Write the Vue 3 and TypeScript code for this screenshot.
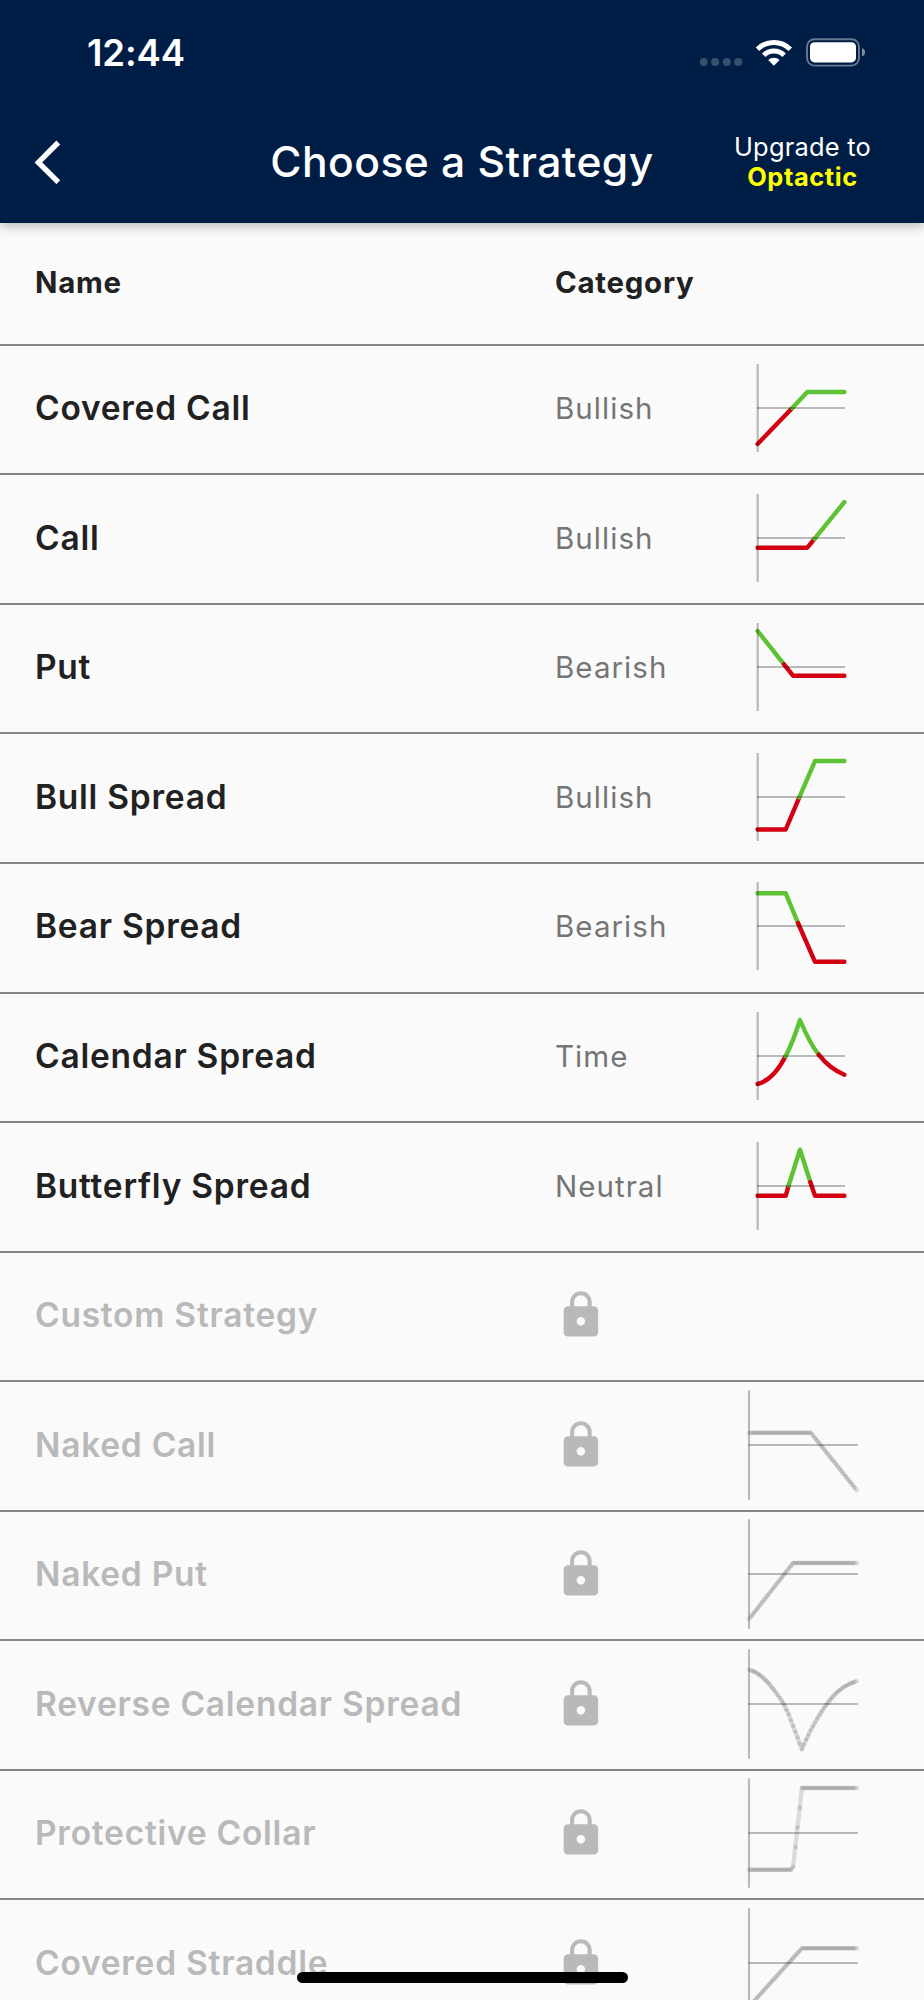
<script setup lang="ts">
type Tone = 'gain' | 'loss'
interface Piece { tone: Tone; d: string }
interface Strategy {
  name: string
  category?: string
  pieces?: Piece[]
  knots?: [number, number][]
}
interface Segment { x1: number; y1: number; x2: number; y2: number }

const strategies: Strategy[] = [
  {
    name: 'Covered Call', category: 'Bullish',
    pieces: [
      { tone: 'loss', d: 'M17.6 36 L52.3 0' },
      { tone: 'gain', d: 'M52.3 0 L67.3 -16 H104.4' },
    ],
  },
  {
    name: 'Call', category: 'Bullish',
    pieces: [
      { tone: 'loss', d: 'M17.6 9.7 H67.3 L74.7 .7' },
      { tone: 'gain', d: 'M74.7 .7 L104.4 -36' },
    ],
  },
  {
    name: 'Put', category: 'Bearish',
    pieces: [
      { tone: 'gain', d: 'M17.6 -36 L44 -2.7' },
      { tone: 'loss', d: 'M44 -2.7 L53 8.7 H104.4' },
    ],
  },
  {
    name: 'Bull Spread', category: 'Bullish',
    pieces: [
      { tone: 'loss', d: 'M17.6 32.5 H45.7 L59.3 .3' },
      { tone: 'gain', d: 'M59.3 .3 L75 -36 H104.4' },
    ],
  },
  {
    name: 'Bear Spread', category: 'Bearish',
    pieces: [
      { tone: 'gain', d: 'M17.6 -32.7 H45.7 L58 -3' },
      { tone: 'loss', d: 'M58 -3 L75 35.8 H104.4' },
    ],
  },
  {
    name: 'Calendar Spread', category: 'Time',
    pieces: [
      { tone: 'loss', d: 'M17.6 28 C30 25 38.5 14 45.7 0' },
      { tone: 'gain', d: 'M45.7 0 C51.5 -11 56.5 -25 60 -36 C65 -24 71 -11 78.7 -1.3' },
      { tone: 'loss', d: 'M78.7 -1.3 C86 8 95 15 104.4 18.7' },
    ],
  },
  {
    name: 'Butterfly Spread', category: 'Neutral',
    pieces: [
      { tone: 'loss', d: 'M17.6 9.7 H45.7 L48.7 -.7' },
      { tone: 'gain', d: 'M48.7 -.7 L60 -36.3 L70.3 -4' },
      { tone: 'loss', d: 'M70.3 -4 L75 9.7 H104.4' },
    ],
  },
  { name: 'Custom Strategy' },
  { name: 'Naked Call', knots: [[0, -12.3], [28, -12.3], [49, 45.3]] },
  { name: 'Naked Put', knots: [[0, 45], [20, -11], [49, -11]] },
  {
    name: 'Reverse Calendar Spread',
    knots: [[0, -34.3], [3, -31.8], [6, -27], [9, -20.5], [12, -12], [14, -6], [16, 1], [18, 10.5], [20, 22], [22, 33.5], [24, 45.3],
      [26, 35.5], [28, 26.3], [31, 14.5], [34, 4], [37, -4.8], [40, -12], [43, -17], [46, -20.5], [49, -23]],
  },
  { name: 'Protective Collar', knots: [[0, 36.7], [19, 36.7], [20, 33.7], [24, -45], [49, -45]] },
  { name: 'Covered Straddle', knots: [[0, 43.5], [24, -14.7], [49, -14.7]] },
]

const STEP = 2.2
const ORIGIN = 9.1

function valueAt(knots: [number, number][], i: number): number {
  for (let k = 1; k < knots.length; k++) {
    const [x0, y0] = knots[k - 1]
    const [x1, y1] = knots[k]
    if (i <= x1) return y0 + ((y1 - y0) * (i - x0)) / (x1 - x0)
  }
  return knots[knots.length - 1][1]
}

// Locked payoffs are stroked one translucent step at a time, so the round caps overlap.
function segments(knots: [number, number][]): Segment[] {
  return Array.from({ length: 49 }, (_, i) => ({
    x1: ORIGIN + i * STEP,
    y1: valueAt(knots, i),
    x2: ORIGIN + (i + 1) * STEP,
    y2: valueAt(knots, i + 1),
  }))
}
</script>

<template>
  <div class="screen">
    <header class="app-bar">
      <div class="status">
        <span class="time">12:44</span>
        <svg class="signals" width="166" height="32" viewBox="700 36 166 32">
          <g fill="#fff" fill-opacity=".22">
            <circle cx="703.7" cy="62" r="4" />
            <circle cx="715.2" cy="62" r="4" />
            <circle cx="726.7" cy="62" r="4" />
            <circle cx="738.2" cy="62" r="4" />
          </g>
          <g fill="none" stroke="#fff" stroke-width="5">
            <path d="M757.5 49.2 A23.3 23.3 0 0 1 790.3 49.2" />
            <path d="M763.7 55.2 A14.8 14.8 0 0 1 784.1 55.2" />
          </g>
          <path d="M773.9 65.8 L768.2 60.1 A8.3 8.3 0 0 1 779.6 60.1 Z" fill="#fff" />
          <rect x="807" y="39.2" width="52" height="26.4" rx="7.5" fill="none" stroke="#fff" stroke-opacity=".4" stroke-width="1.9" />
          <rect x="810" y="42.2" width="46" height="20.2" rx="4.6" fill="#fff" />
          <path d="M862 48 Q865 49 865 52.2 Q865 55.4 862 56.4 Z" fill="#fff" fill-opacity=".5" />
        </svg>
      </div>
      <div class="nav">
        <svg class="back" width="30" height="44" viewBox="32 140 30 44">
          <path d="M58.3 142.5 L38.4 162.4 L58.3 182.2" fill="none" stroke="#fff" stroke-width="5.4" />
        </svg>
        <h1 class="title">Choose a Strategy</h1>
        <div class="upgrade">
          <span class="upgrade-lead">Upgrade to</span>
          <strong class="upgrade-name">Optactic</strong>
        </div>
      </div>
    </header>

    <div class="columns">
      <span>Name</span>
      <span class="columns-category">Category</span>
    </div>

    <div v-for="s in strategies" :key="s.name" class="row" :class="{ locked: !s.category }">
      <span class="name">{{ s.name }}</span>
      <span v-if="s.category" class="category">{{ s.category }}</span>
      <svg v-else class="lock" viewBox="0 0 24 24">
        <path
          fill="#b9b9b9"
          d="M18 8h-1V6c0-2.76-2.24-5-5-5S7 3.24 7 6v2H6c-1.1 0-2 .9-2 2v10c0 1.1.9 2 2 2h12c1.1 0 2-.9 2-2V10c0-1.1-.9-2-2-2zm-6 9c-1.1 0-2-.9-2-2s.9-2 2-2 2 .9 2 2-.9 2-2 2zm3.1-9H8.9V6c0-1.71 1.39-3.1 3.1-3.1 1.71 0 3.1 1.39 3.1 3.1v2z"
        />
      </svg>
      <svg v-if="s.pieces" class="chart" viewBox="0 -62 124 124">
        <path v-for="(p, i) in s.pieces" :key="i" :d="p.d" :class="p.tone" />
        <path class="axis" d="M17.7 -44 V44" />
        <path class="axis" d="M17 0 H105" />
      </svg>
      <svg v-else-if="s.knots" class="chart" viewBox="0 -62 124 124">
        <path class="axis" d="M9 -54.7 V54.7" />
        <path class="axis" d="M8.3 0 H118" />
        <line v-for="(g, i) in segments(s.knots)" :key="i" class="step" :x1="g.x1" :y1="g.y1" :x2="g.x2" :y2="g.y2" />
      </svg>
    </div>

    <div class="home-indicator"></div>
  </div>
</template>

<style>
body {
  margin: 0;
  background: #fafafa;
}
</style>

<style scoped>
.screen {
  position: relative;
  width: 924px;
  height: 2000px;
  overflow: hidden;
  background: #fafafa;
  color: #212121;
  font-family: Inter, "Liberation Sans", sans-serif;
}

.app-bar {
  position: relative;
  height: 222.5px;
  background: #001e45;
  color: #fff;
  box-shadow: 0 4px 10px rgba(0, 0, 0, 0.24);
}

.status {
  display: flex;
  align-items: center;
  justify-content: space-between;
  box-sizing: border-box;
  height: 102.5px;
  padding: 2px 58px 0 87px;
}

.time {
  padding-top: 2px;
  font-size: 36.5px;
  font-weight: 600;
  letter-spacing: -0.1px;
}

.nav {
  display: grid;
  grid-template-columns: 176px 572px 110px;
  align-items: center;
  height: 118.4px;
  padding-left: 32px;
}

.title {
  margin: 0;
  font-size: 42.6px;
  line-height: 52px;
  font-weight: 500;
  letter-spacing: 0.45px;
  text-align: center;
  width: 508px;
}

.upgrade {
  display: flex;
  flex-direction: column;
  align-items: center;
  justify-self: center;
  margin-left: -65px;
  padding-top: 1px;
  font-size: 25.4px;
  line-height: 30.4px;
  white-space: nowrap;
}

.upgrade-lead {
  letter-spacing: 0.25px;
}

.upgrade-name {
  color: #ff0;
  font-weight: 700;
  letter-spacing: 0.6px;
}

.columns {
  display: grid;
  grid-template-columns: 520px 1fr;
  align-items: center;
  box-sizing: border-box;
  height: 123.3px;
  padding: 0 0 2px 35px;
  border-bottom: 2px solid #86868a;
  font-size: 29.4px;
  font-weight: 700;
  letter-spacing: 0.75px;
}

.row {
  display: grid;
  grid-template-columns: 520px 185px 124px;
  align-items: center;
  box-sizing: border-box;
  height: 129.55px;
  padding: 0 0 2.6px 35px;
  border-bottom: 2px solid #86868a;
}

.name {
  font-size: 33.5px;
  font-weight: 600;
  letter-spacing: 0.75px;
}

.locked .name {
  color: #b9b9b9;
}

.category {
  color: #757575;
  font-size: 29.5px;
  letter-spacing: 1.05px;
}

.lock {
  width: 51.8px;
  height: 51.8px;
}

.chart {
  width: 124px;
  height: 124px;
}

.chart path,
.chart line {
  fill: none;
  stroke-width: 4.4;
  stroke-linecap: round;
  stroke-linejoin: round;
}

.chart .gain {
  stroke: #5fc134;
}

.chart .loss {
  stroke: #d20010;
}

.chart .axis {
  stroke: rgba(0, 0, 0, 0.26);
  stroke-width: 2.2;
  stroke-linecap: butt;
}

.chart .step {
  stroke: rgba(0, 0, 0, 0.12);
}

.home-indicator {
  position: absolute;
  left: 297px;
  bottom: 17px;
  width: 331px;
  height: 11px;
  border-radius: 6px;
  background: #000;
}
</style>
